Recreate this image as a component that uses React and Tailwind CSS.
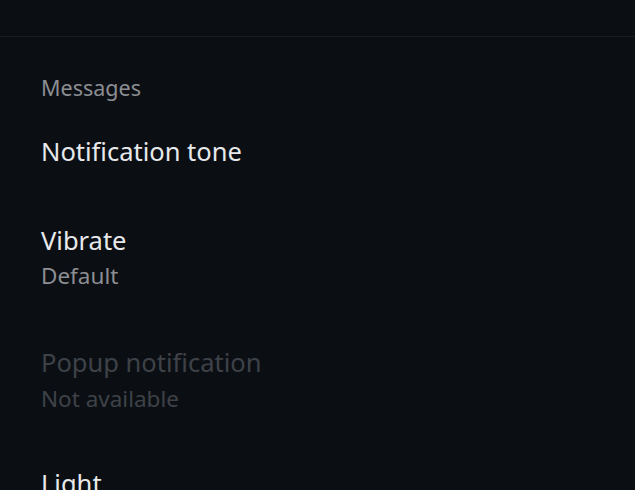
export default function App() {
  const font = { fontFamily: "'Noto Sans', 'Open Sans', sans-serif" };
  return (
    <div className="w-[635px] h-[490px] overflow-hidden bg-[#0b0f14]" style={font}>
      <div className="h-[37px] border-b border-[#171b20]" />
      <div className="px-[41px]">
        <div className="mt-[38px] text-[21.5px] leading-[26px] text-[#8b8e92]">Messages</div>
        <div className="mt-[35px] text-[25.5px] leading-[30px] text-[#e7e9eb]">Notification tone</div>
        <div className="mt-[59px] text-[25.5px] leading-[30px] text-[#e7e9eb]">Vibrate</div>
        <div className="mt-[8px] text-[22.5px] leading-[26px] text-[#8b8e92]">Default</div>
        <div className="mt-[58px] text-[25.5px] leading-[30px] text-[#3e4248]">Popup notification</div>
        <div className="mt-[9px] text-[22.5px] leading-[26px] text-[#3e4248]">Not available</div>
        <div className="mt-[56px] text-[25.5px] leading-[30px] text-[#e7e9eb]">Light</div>
      </div>
    </div>
  );
}
